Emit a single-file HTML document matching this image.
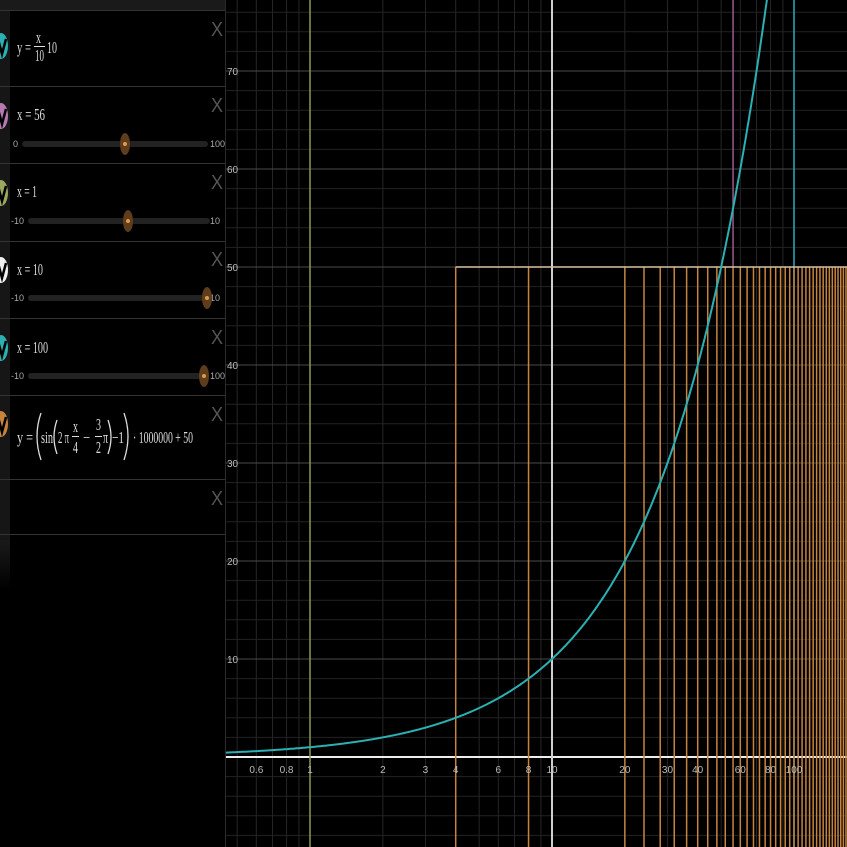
<!DOCTYPE html>
<html><head><meta charset="utf-8"><style>
html,body{margin:0;padding:0;background:#000;width:847px;height:847px;overflow:hidden}
svg{display:block}
text{font-family:"Liberation Serif",serif}
.m{fill:#ddd;font-size:17px}
.s{fill:#aaa;font-size:9px;font-family:"Liberation Sans",sans-serif}
.ax{fill:#bbb;font-size:10px;font-family:"Liberation Sans",sans-serif}
.x{fill:#555;font-size:20px;font-family:"Liberation Sans",sans-serif}
</style></head><body>
<svg id="g" width="847" height="847" xmlns="http://www.w3.org/2000/svg">
<rect width="847" height="847" fill="#000"/>
<g id="grid"></g>
<g id="plot"></g>
<g id="labels"></g>
<rect x="0" y="0" width="225" height="847" fill="#000"/>
<defs><linearGradient id="fd" x1="0" y1="0" x2="0" y2="1"><stop offset="0" stop-color="#1a1a1a"/><stop offset="1" stop-color="#000"/></linearGradient></defs>
<rect x="0" y="0" width="225" height="10" fill="#1a1a1a"/>
<rect x="0" y="10" width="10" height="530" fill="#161616"/>
<rect x="0" y="540" width="10" height="50" fill="url(#fd)"/>
<line x1="225.5" y1="0" x2="225.5" y2="847" stroke="#2a2a2a"/>
<g stroke="#333" stroke-width="1">
<line x1="0" y1="10.5" x2="225" y2="10.5"/><line x1="0" y1="86.5" x2="225" y2="86.5"/>
<line x1="0" y1="163.5" x2="225" y2="163.5"/><line x1="0" y1="241.5" x2="225" y2="241.5"/>
<line x1="0" y1="318.5" x2="225" y2="318.5"/><line x1="0" y1="395.5" x2="225" y2="395.5"/>
<line x1="0" y1="479.5" x2="225" y2="479.5"/><line x1="0" y1="534.5" x2="225" y2="534.5"/>
</g>
<g id="icons"></g>
<g class="x">
<text class="x" x="211" y="36" textLength="12" lengthAdjust="spacingAndGlyphs">X</text><text class="x" x="211" y="112" textLength="12" lengthAdjust="spacingAndGlyphs">X</text>
<text class="x" x="211" y="189" textLength="12" lengthAdjust="spacingAndGlyphs">X</text><text class="x" x="211" y="266" textLength="12" lengthAdjust="spacingAndGlyphs">X</text>
<text class="x" x="211" y="344" textLength="12" lengthAdjust="spacingAndGlyphs">X</text><text class="x" x="211" y="421" textLength="12" lengthAdjust="spacingAndGlyphs">X</text>
<text class="x" x="211" y="505" textLength="12" lengthAdjust="spacingAndGlyphs">X</text>
</g>
<!-- expression 1 -->
<text class="m" x="17" y="53" textLength="14" lengthAdjust="spacingAndGlyphs">y =</text>
<text class="m" x="36" y="43" font-size="13" textLength="5" lengthAdjust="spacingAndGlyphs">x</text>
<line x1="34" y1="46.5" x2="45" y2="46.5" stroke="#ddd"/>
<text class="m" x="35" y="61" font-size="13" textLength="9" lengthAdjust="spacingAndGlyphs">10</text>
<text class="m" x="47" y="53" textLength="10" lengthAdjust="spacingAndGlyphs">10</text>
<text class="m" x="17" y="120" textLength="28" lengthAdjust="spacingAndGlyphs">x = 56</text>
<text class="m" x="17" y="197" textLength="20" lengthAdjust="spacingAndGlyphs">x = 1</text>
<text class="m" x="17" y="275" textLength="26" lengthAdjust="spacingAndGlyphs">x = 10</text>
<text class="m" x="17" y="353" textLength="31" lengthAdjust="spacingAndGlyphs">x = 100</text>
<!-- big expression -->
<text class="m" x="17" y="443" textLength="16" lengthAdjust="spacingAndGlyphs">y =</text>
<path d="M41 413 Q33 436 41 460" fill="none" stroke="#ddd" stroke-width="1.3"/>
<text class="m" x="41" y="443" textLength="12" lengthAdjust="spacingAndGlyphs">sin</text>
<path d="M57 420 Q51 437 57 454" fill="none" stroke="#ddd" stroke-width="1.3"/>
<text class="m" x="58" y="443" textLength="11" lengthAdjust="spacingAndGlyphs">2 π</text>
<text class="m" x="73" y="432" font-size="12" textLength="5" lengthAdjust="spacingAndGlyphs">x</text>
<line x1="72" y1="436.5" x2="79" y2="436.5" stroke="#ddd"/>
<text class="m" x="73" y="453" font-size="12" textLength="5" lengthAdjust="spacingAndGlyphs">4</text>
<text class="m" x="83" y="443" textLength="7" lengthAdjust="spacingAndGlyphs">−</text>
<text class="m" x="96" y="430" font-size="12" textLength="5" lengthAdjust="spacingAndGlyphs">3</text>
<line x1="95" y1="436.5" x2="102" y2="436.5" stroke="#ddd"/>
<text class="m" x="96" y="453" font-size="12" textLength="5" lengthAdjust="spacingAndGlyphs">2</text>
<text class="m" x="103" y="443" textLength="5" lengthAdjust="spacingAndGlyphs">π</text>
<path d="M108 420 Q114 437 108 454" fill="none" stroke="#ddd" stroke-width="1.3"/>
<text class="m" x="112" y="443" textLength="12" lengthAdjust="spacingAndGlyphs">−1</text>
<path d="M124 413 Q132 436 124 460" fill="none" stroke="#ddd" stroke-width="1.3"/>
<text class="m" x="133" y="443" textLength="60" lengthAdjust="spacingAndGlyphs">· 1000000 + 50</text>
<g id="sl"></g>
<script>
var NS="http://www.w3.org/2000/svg";
function el(p,t,a,txt){var e=document.createElementNS(NS,t);for(var k in a)e.setAttribute(k,a[k]);if(txt)e.textContent=txt;document.getElementById(p).appendChild(e);return e;}
function X(v){return 552+242*(Math.log10(v)-1);}
function Y(v){return 757-9.8*v;}
var vs=[];for(var d=-1;d<=2;d++)for(var i=1;i<=9;i++)vs.push([i,i*Math.pow(10,d)]);
vs.forEach(function(a){var x=X(a[1]);if(x<226||x>847)return;var c=(a[0]==1)?"#444":"#262626";
el("grid","line",{x1:x,x2:x,y1:0,y2:847,stroke:c});
for(var h=1;h<5;h++){var xx=X(a[1]*(1+h*0.2*(a[0]<3?1:0)));}});
for(var y=-8;y<=78;y+=2){var py=Y(y);el("grid","line",{x1:226,x2:847,y1:py,y2:py,stroke:(y%10==0)?"#4a4a4a":"#232323"});}
el("grid","line",{x1:226,x2:847,y1:757,y2:757,stroke:"#eee","stroke-width":2});
el("plot","line",{x1:X(1),x2:X(1),y1:0,y2:847,stroke:"#8a9a50","stroke-width":1.5});
el("plot","line",{x1:X(10),x2:X(10),y1:0,y2:847,stroke:"#cfcfcf","stroke-width":2});
el("plot","line",{x1:X(56),x2:X(56),y1:0,y2:267,stroke:"#9a5a8a","stroke-width":1.5});
el("plot","line",{x1:X(100),x2:X(100),y1:0,y2:847,stroke:"#2bb0b3","stroke-width":1.5});
for(var k=4;k<170;k+=4){if(k==12||k==16)continue;var x=X(k);if(x>848)break;el("plot","line",{x1:x,x2:x,y1:267,y2:847,stroke:"#c7843e","stroke-width":1.5});}
el("plot","line",{x1:X(4),x2:847,y1:267,y2:267,stroke:"#d9c3a5","stroke-width":1.5});
var pts=[];for(var v=0.44;v<=78;v*=1.01)pts.push(X(v).toFixed(1)+","+Y(v).toFixed(1));
el("plot","polyline",{points:pts.join(" "),fill:"none",stroke:"#2bb0b3","stroke-width":2});
[10,20,30,40,50,60,70].forEach(function(a){el("labels","text",{x:227,y:Y(a)+4,"class":"ax"},String(a));});
[[0.6,"0.6"],[0.8,"0.8"],[1,"1"],[2,"2"],[3,"3"],[4,"4"],[6,"6"],[8,"8"],[10,"10"],[20,"20"],[30,"30"],[40,"40"],[60,"60"],[80,"80"],[100,"100"]].forEach(function(a){el("labels","text",{x:X(a[0]),y:773,"class":"ax","text-anchor":"middle"},a[1]);});
[[46,"#2bb0b3"],[116,"#b77ab0"],[193,"#9aa860"],[270,"#f0f0f0"],[348,"#2bb0b3"],[424,"#c7843e"]].forEach(function(a){
el("icons","ellipse",{cx:1,cy:a[0],rx:7,ry:13,fill:a[1]});
el("icons","path",{d:"M-2 "+(a[0]-7)+" L2 "+(a[0]+8)+" L6 "+(a[0]-7),fill:"none",stroke:"#000","stroke-width":2.5});});
[[144,25,205,125,"0","100"],[221,31,207,128,"-10","10"],[298,31,207,207,"-10","10"],[376,31,205,204,"-10","100"]].forEach(function(s){
el("sl","line",{x1:s[1],x2:s[2],y1:s[0],y2:s[0],stroke:"#222","stroke-width":6,"stroke-linecap":"round"});
el("sl","text",{x:s[1]-7,y:s[0]+3,"class":"s","text-anchor":"end"},s[4]);
el("sl","text",{x:210,y:s[0]+3,"class":"s"},s[5]);
el("sl","ellipse",{cx:s[3],cy:s[0],rx:5,ry:11,fill:"#5e3d1c"});
el("sl","circle",{cx:s[3],cy:s[0],r:2,fill:"#e09a4a"});});
</script>
</svg>
</body></html>
